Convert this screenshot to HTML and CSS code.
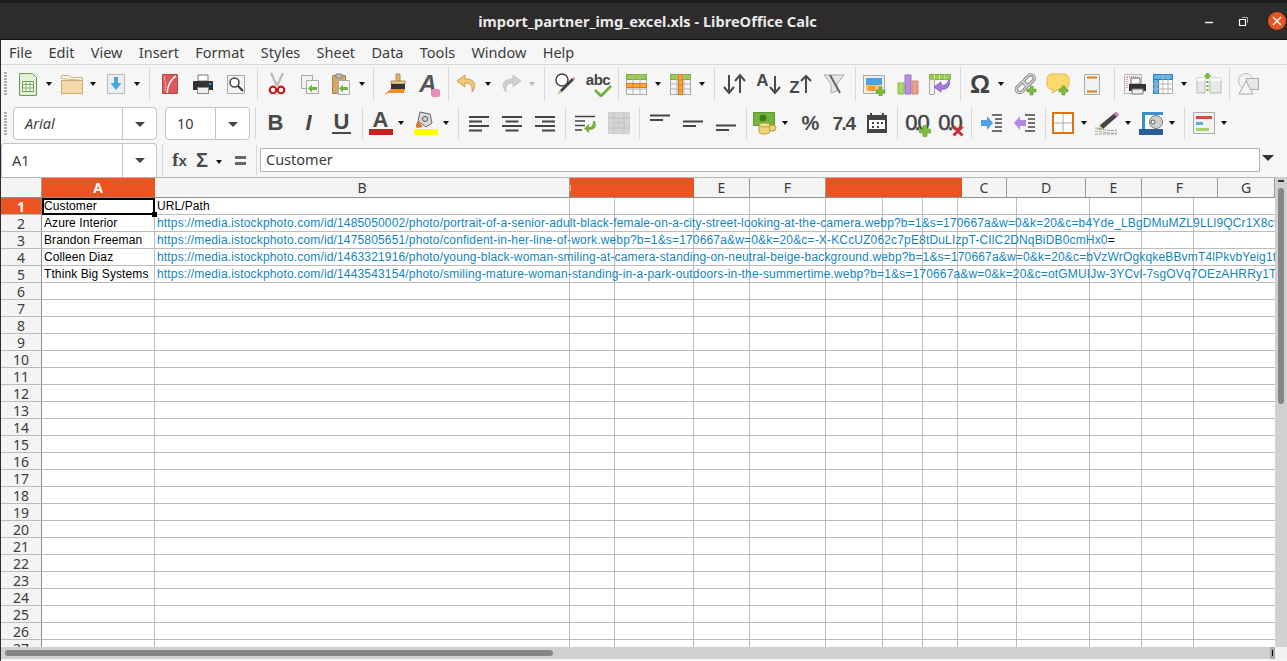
FILE: index.html
```html
<!DOCTYPE html>
<html>
<head>
  <meta charset="UTF-8">
  <title>import_partner_img_excel.xls - LibreOffice Calc</title>
  <link rel="stylesheet" href="styles.css">
</head>
<body>
<div class="window">
  <div class="titlebar">
    <div class="title">import_partner_img_excel.xls - LibreOffice Calc</div>
    <div class="winbtns">
      <svg class="winbtn" width="40" height="36" viewBox="0 0 40 36"><path d="M24 19.500h8" stroke="#eee" stroke-width="1.500"/></svg>
      <svg class="winbtn" width="40" height="36" viewBox="0 0 40 36"><path d="M18.500 16.500h6v6h-6z" fill="none" stroke="#fff" stroke-width="1.200"/><path d="M21 14.500h5.500v5.500" fill="none" stroke="#aaa"/></svg>
      <div class="closebtn"><svg width="10" height="10" viewBox="0 0 10 10"><path d="M1 1l8 8M9 1l-8 8" stroke="#fff" stroke-width="1.400"/></svg></div>
    </div>
  </div>

  <div class="menubar">
    <span>File</span><span>Edit</span><span>View</span><span>Insert</span><span>Format</span><span>Styles</span><span>Sheet</span><span>Data</span><span>Tools</span><span>Window</span><span>Help</span>
  </div>

  <div class="toolbar tb1">
    <div class="grip"></div>
    <div class="btn"><svg width="24" height="24"><path d="M3.500 1.500h13l4 4v18h-17z" fill="#e4efd9" stroke="#6f9a55"/><path d="M6.500 9.500h11v10h-11z" fill="#fff" stroke="#6f9a55"/><path d="M6.500 12.500h11M6.500 16h11M10 9.500v10M14 9.500v10" stroke="#7fa866"/></svg></div>
    <div class="arr"></div>
    <div class="btn"><svg width="24" height="24"><path d="M1.500 6.500v-3h8l2 2h11v3z" fill="#fbf3e0" stroke="#cdb68c"/><path d="M1.500 8.500h21v13h-21z" fill="#f3d9a9" stroke="#c9aa76"/></svg></div>
    <div class="arr"></div>
    <div class="btn"><svg width="24" height="24"><path d="M3.500 2.500h17v19h-17z" fill="#eceff1" stroke="#b9bdbf"/><path d="M10 5h4v6h3.500l-5.500 7-5.500-7h3.500z" fill="#42a5e5"/></svg></div>
    <div class="arr"></div>
    <div class="sep s10"></div>
    <div class="btn"><svg width="24" height="24"><path d="M4.500 2.500h15v19h-15z" fill="#d85a5a" stroke="#b24a4a"/><path d="M18 4c-5 3-8 8-9 17" fill="none" stroke="#fbeaea" stroke-width="1.500"/><path d="M6 4c2 5 2 10 1 15" fill="none" stroke="#eea0a0" stroke-width="1.200"/></svg></div>
    <div class="btn"><svg width="24" height="24"><path d="M7 3h10v6H7z" fill="#fff" stroke="#777"/><path d="M3 9h18a1 1 0 0 1 1 1v8h-4v-2H6v2H2v-8a1 1 0 0 1 1-1z" fill="#333"/><path d="M6.500 15.500h11v6h-11z" fill="#eee" stroke="#888"/><path d="M18 11h2v2h-2z" fill="#2aa6dd"/></svg></div>
    <div class="btn"><svg width="24" height="24"><path d="M3.500 3.500h17v18h-17z" fill="#f3f3f3" stroke="#a8a8a8"/><circle cx="10.500" cy="10.500" r="4.500" fill="#fff" stroke="#444" stroke-width="1.500"/><path d="M14 14l5 5" stroke="#333" stroke-width="2"/></svg></div>
    <div class="sep s8"></div>
    <div class="btn"><svg width="24" height="24"><path d="M6 1l6 13M18 1l-6 13" stroke="#a5a5a5" stroke-width="2"/><path d="M6 1l6 13M18 1l-6 13" stroke="#dcdcdc" stroke-width=".7"/><circle cx="8" cy="18" r="3.300" fill="none" stroke="#c21d1d" stroke-width="2.200"/><circle cx="16" cy="18" r="3.300" fill="none" stroke="#c21d1d" stroke-width="2.200"/><path d="M4 22.500h16" stroke="#ddd"/></svg></div>
    <div class="btn"><svg width="24" height="24"><path d="M3.500 3.500h11v13h-11z" fill="#f0f0f0" stroke="#aaa"/><path d="M8.500 8.500h12v13h-12z" fill="#f6f6f6" stroke="#aaa"/><path d="M19 15h-5v-2.500l-4 4 4 4v-2.500h5z" fill="#6fb33c"/></svg></div>
    <div class="btn mm2"><svg width="24" height="24"><path d="M3.500 3.500h13v18h-13z" fill="#d3a768" stroke="#a98450"/><path d="M7 2h6v4H7z" fill="#bbb" stroke="#888"/><path d="M9.500 8.500h11v14h-11z" fill="#f6f6f6" stroke="#aaa"/><path d="M19 15h-5v-2.500l-4 4 4 4v-2.500h5z" fill="#6fb33c"/></svg></div>
    <div class="arr"></div>
    <div class="sep s9"></div>
    <div class="btn"><svg width="24" height="24"><path d="M14 2h4v7h-4z" fill="#e0b878" stroke="#b38e54"/><path d="M9 9h14v3H9z" fill="#e8c88e" stroke="#b38e54"/><path d="M9 12h14v5H9z" fill="#333"/><path d="M9 17h14l-1 4H6l-4 2 3-3z" fill="#ee8d2a"/></svg></div>
    <div class="btn m1"><span class="clone"><b>A</b><i></i></span></div>
    <div class="sep s6"></div>
    <div class="btn"><svg width="24" height="24"><path d="M10 3L2 9l8 6v-4c5 0 8 2 7 9 4-5 5-13-7-13z" fill="#f0c877" stroke="#d39f3e"/></svg></div>
    <div class="arr"></div>
    <div class="btn"><svg width="24" height="24"><path d="M14 3l8 6-8 6v-4c-5 0-8 2-7 9-4-5-5-13 7-13z" fill="#cfcfcf" stroke="#c4c4c4"/></svg></div>
    <div class="arr off"></div>
    <div class="sep s10"></div>
    <div class="btn"><svg width="24" height="24"><circle cx="9" cy="8" r="6" fill="#fff" stroke="#444" stroke-width="1.500"/><path d="M21 8L9 20l-4 2 2-4L19 6z" fill="#444"/><path d="M21 8l-2-2 1.500-1 2 2z" fill="#e77fb3"/><path d="M5 22l2-4 2 2z" fill="#e8cf73"/></svg></div>
    <div class="btn"><span class="abc">abc</span><svg class="tick" width="20" height="12"><path d="M2 5l6 6L18 1" fill="none" stroke="#6db33f" stroke-width="2.800"/></svg></div>
    <div class="sep s6"></div>
    <div class="btn"><svg width="24" height="24"><use href="#tbl"/><path d="M1.500 11.500h20v4h-20z" fill="#f8a83f" stroke="#dd7c18"/><path d="M8 11.500v4M15 11.500v4" stroke="#dd7c18"/></svg></div>
    <div class="arr"></div>
    <div class="btn"><svg width="24" height="24"><use href="#tbl"/><path d="M9.500 2.500h4v20h-4z" fill="#f8a83f" stroke="#dd7c18"/><path d="M9.500 8h4M9.500 13h4M9.500 18h4" stroke="#dd7c18"/></svg></div>
    <div class="arr"></div>
    <div class="sep s10"></div>
    <div class="btn"><svg width="26" height="24"><path d="M7 3v18M2 15l5 6 5-6M18 21V3M13 9l5-6 5 6" fill="none" stroke="#4a4a4a" stroke-width="2"/></svg></div>
    <div class="btn m1"><span class="sortl up">A</span><svg width="13" height="24"><path d="M6 4v17M1 15l5 6 5-6" fill="none" stroke="#4a4a4a" stroke-width="2"/></svg></div>
    <div class="btn mm1"><span class="sortl down">Z</span><svg width="13" height="24"><path d="M6 21V4M1 9l5-5 5 5" fill="none" stroke="#4a4a4a" stroke-width="2"/></svg></div>
    <div class="btn"><svg width="24" height="24"><path d="M2 3h20l-7 9v7l-6 2v-9z" fill="#e6e6e6" stroke="#aaa"/><path d="M8 3l10 18" stroke="#666" stroke-width="2"/></svg></div>
    <div class="sep s8"></div>
    <div class="btn"><svg width="24" height="24"><path d="M.5 3.500h21v18H.5z" fill="#eee" stroke="#aaa"/><path d="M3 6h16v13H3z" fill="#49a4e0"/><path d="M3 13h16v6H3z" fill="#f5c96a"/><path d="M5 14h7v5H5z" fill="#ef9a3a"/><path d="M16 15h3v3h3v3h-3v3h-3v-3h-3v-3h3z" fill="#7cbd3f" stroke="#5b9a2b" stroke-width=".6"/></svg></div>
    <div class="btn"><svg width="24" height="24"><path d="M2 11h6v11H2z" fill="#a9d66d" stroke="#8cb954"/><path d="M9 3h6v19H9z" fill="#b790dc" stroke="#9672bb"/><path d="M16 9h6v13h-6z" fill="#ee9f8c" stroke="#cf8271"/></svg></div>
    <div class="btn mm1"><svg width="24" height="24"><path d="M1.500 2.500h21v5h-21z" fill="#9ccb55" stroke="#80ad3f"/><path d="M1.500 7.500h5v15h-5z" fill="#f2f2f2" stroke="#aaa"/><path d="M6.500 2.500v5M11.500 2.500v5M17 2.500v5" stroke="#cfe6a5"/><path d="M21 8c2 6-2 10-8 9v3l-7-5 7-5v3c4 1 6-1 8-5z" fill="#a77be0" stroke="#8a5ec8"/></svg></div>
    <div class="sep s7"></div>
    <div class="btn"><span class="omega">Ω</span></div>
    <div class="arr"></div>
    <div class="btn m2"><svg width="24" height="24"><g fill="none"><g stroke="#858585" stroke-width="3.200"><rect x="1.500" y="12" width="12" height="7" rx="3.500" transform="rotate(-45 7.500 15.500)"/><rect x="9" y="4.500" width="12" height="7" rx="3.500" transform="rotate(-45 15 8)"/></g><g stroke="#e2e2e2" stroke-width="1.100"><rect x="1.500" y="12" width="12" height="7" rx="3.500" transform="rotate(-45 7.500 15.500)"/><rect x="9" y="4.500" width="12" height="7" rx="3.500" transform="rotate(-45 15 8)"/></g></g><path d="M16 14h3v3h3v3h-3v3h-3v-3h-3v-3h3z" fill="#7cbd3f" stroke="#5b9a2b" stroke-width=".6"/></svg></div>
    <div class="btn mm1"><svg width="24" height="24"><path d="M6 2h12a5 5 0 0 1 5 5v5a5 5 0 0 1-5 5h-5l-7 4 2-4a5 5 0 0 1-7-5V7a5 5 0 0 1 5-5z" fill="#fbd96d" stroke="#e2b94a"/><path d="M16 14h3v3h3v3h-3v3h-3v-3h-3v-3h3z" fill="#7cbd3f" stroke="#5b9a2b" stroke-width=".6"/></svg></div>
    <div class="btn m1"><svg width="24" height="24"><path d="M4.500 2.500h15v20h-15z" fill="#f1f1f1" stroke="#aaa"/><path d="M7 5.500h10M7 19.500h10" stroke="#e07a12" stroke-width="2"/></svg></div>
    <div class="sep s10"></div>
    <div class="btn"><svg width="24" height="24"><path d="M1.500 2.500h17v19h-17z" fill="#f2f2f2" stroke="#bbb"/><path d="M4 5h12M4 5v12" stroke="#d55" stroke-dasharray="1 1"/><path d="M8 6h9v6H8z" fill="#fff" stroke="#666"/><path d="M6 12h17v7h-3v-1H9v1H6z" fill="#333"/><path d="M9 17h11v5H9z" fill="#eee" stroke="#777"/></svg></div>
    <div class="btn tight"><svg width="24" height="24"><path d="M2.500 2.500h19v19h-19z" fill="#fff" stroke="#aaa"/><path d="M2.500 2.500h19v5h-19zM2.500 7.500h5v14h-5z" fill="#5eb0e5" stroke="#2b80c0"/><path d="M7.500 12h14M7.500 17h14M12 7.500v14M17 7.500v14M2.500 12h5M2.500 17h5M12 2.500v5M17 2.500v5" stroke="#b5b5b5"/></svg></div>
    <div class="arr"></div>
    <div class="btn m2"><svg width="26" height="24"><path d="M1 6h8v15H1zM14 6h11v15H14z" fill="#e8e8e8" stroke="#aaa" stroke-width=".8"/><path d="M1 6h8v3H1zM14 6h11v3H14z" fill="#fafafa"/><path d="M11.500 5v2M11.500 9v2M11.500 13v2M11.500 17v2" stroke="#69ad33" stroke-width="2"/><path d="M10 1h3v1.500h1.500v3H13V7h-3V5.500H8.500v-3H10z" fill="#7cbd3f"/></svg></div>
    <div class="sep s7"></div>
    <div class="btn"><svg width="24" height="24"><circle cx="9" cy="9" r="7.500" fill="#f2f2f2" stroke="#bbb"/><path d="M9.500 6.500h12v11h-12z" fill="#e6e6e6" stroke="#aaa"/><path d="M9 9L16 22H2z" fill="#f4f4f4" stroke="#aaa"/></svg></div>
  </div>

  <div class="toolbar tb2">
    <div class="grip"></div>
    <div class="combo fontbox"><span class="comboval italic">Arial</span><span class="combodrop"><i></i></span></div>
    <div class="combo sizebox"><span class="comboval">10</span><span class="combodrop"><i></i></span></div>
    <div class="sep s9"></div>
    <div class="btn"><span class="fmt bold">B</span></div>
    <div class="btn"><span class="fmt slant">I</span></div>
    <div class="btn"><span class="fmt under">U</span></div>
    <div class="sep s8"></div>
    <div class="btn mm2"><span class="fcolor">A</span></div>
    <div class="arr"></div>
    <div class="btn m1"><svg width="26" height="24"><path d="M7 1l10 2 2 9-6 4-8-6z" fill="#d9d9d9" stroke="#666"/><circle cx="12" cy="8" r="2.500" fill="none" stroke="#555"/><path d="M5 10c-2 3-3 5-1 7l6-1z" fill="#d9772a"/><path d="M1 18h24v6H1z" fill="#ffff00"/></svg></div>
    <div class="arr"></div>
    <div class="sep s9"></div>
    <div class="btn"><svg width="24" height="24"><path d="M2 6h20M2 10.500h13M2 15h20M2 19.500h13" stroke="#444" stroke-width="1.800"/></svg></div>
    <div class="btn"><svg width="24" height="24"><path d="M2 6h20M5.500 10.500h13M2 15h20M5.500 19.500h13" stroke="#444" stroke-width="1.800"/></svg></div>
    <div class="btn"><svg width="24" height="24"><path d="M2 6h20M9 10.500h13M2 15h20M9 19.500h13" stroke="#444" stroke-width="1.800"/></svg></div>
    <div class="sep s8"></div>
    <div class="btn"><svg width="24" height="24"><path d="M1 5.500h20M1 10h10M1 14.500h10M1 19h7" stroke="#444" stroke-width="1.600"/><path d="M21 10c2 6 0 9-6 9v3l-5-4.500 5-4.500v3c2 0 4-1 4-6z" fill="#6fb33c"/></svg></div>
    <div class="btn"><svg width="24" height="24"><path d="M1.500 1.500h21v21h-21z" fill="#d5d5d5" stroke="#cfcfcf"/><path d="M1.500 7h21M1.500 17h21M7 1.500v21M17 1.500v21M7 12h10M12 7v10" stroke="#c0c0c0"/></svg></div>
    <div class="sep s8"></div>
    <div class="btn"><svg width="24" height="24"><path d="M2 4.500h20M2 9h13" stroke="#444" stroke-width="1.800"/></svg></div>
    <div class="btn"><svg width="24" height="24"><path d="M2 10.500h20M2 15h13" stroke="#444" stroke-width="1.800"/></svg></div>
    <div class="btn"><svg width="24" height="24"><path d="M2 14.500h20M2 19h13" stroke="#444" stroke-width="1.800"/></svg></div>
    <div class="sep s8"></div>
    <div class="btn mm2"><svg width="24" height="24"><path d="M.5 1.500h21v13H.5z" fill="#74b33d" stroke="#5b9a2b"/><circle cx="10" cy="7" r="3.500" fill="#3f7f1d"/><path d="M6 14h11v7a5.500 2 0 0 1-11 0z" fill="#ecd27a" stroke="#b89b3f"/><ellipse cx="11.500" cy="14" rx="5.500" ry="2" fill="#f3e09a" stroke="#b89b3f"/><ellipse cx="19.500" cy="17" rx="3.500" ry="3" fill="#ecd27a" stroke="#b89b3f"/></svg></div>
    <div class="arr"></div>
    <div class="btn m2"><span class="fmt pct">%</span></div>
    <div class="btn"><span class="fmt numfmt">7.4</span></div>
    <div class="btn"><svg width="24" height="24"><path d="M2 4h20v18H2z" fill="#444"/><path d="M4 9h16v9H4z" fill="#fff"/><path d="M6 4V2M18 4V2" stroke="#444" stroke-width="2"/><path d="M7 11h2v2H7zM12 11h2v2h-2zM16 11h2v2h-2zM7 15h2v2H7zM12 15h2v2h-2z" fill="#444"/></svg></div>
    <div class="sep s8"></div>
    <div class="btn"><span class="dec">0.0</span><svg class="badge" width="12" height="12"><path d="M4 .5h4v3.500h3.500v4H8v3.500H4V8H.5V4H4z" fill="#7cbd3f" stroke="#5b9a2b" stroke-width=".6"/></svg></div>
    <div class="btn"><span class="dec">0.0</span><svg class="badge" width="12" height="12"><path d="M1.500 1.500l9 9M10.500 1.500l-9 9" stroke="#c8303c" stroke-width="3"/></svg></div>
    <div class="sep s8"></div>
    <div class="btn"><svg width="24" height="24"><path d="M12 4h10M15 8h7M15 12h7M15 16h7M12 20h10" stroke="#444" stroke-width="1.500"/><path d="M1 9h6V5l6 7-6 7v-4H1z" fill="#4da4e3"/></svg></div>
    <div class="btn"><svg width="24" height="24"><path d="M12 4h10M15 8h7M15 12h7M15 16h7M12 20h10" stroke="#444" stroke-width="1.500"/><path d="M13 9H7V5l-6 7 6 7v-4h6z" fill="#b58ae3"/></svg></div>
    <div class="sep s8"></div>
    <div class="btn mm3"><svg width="24" height="24"><path d="M2 2h20v20H2z" fill="#fff" stroke="#dd7410" stroke-width="2"/><path d="M12 3v18M3 12h18" stroke="#aaa"/></svg></div>
    <div class="arr m1"></div>
    <div class="btn mm1"><svg width="26" height="24"><path d="M22 1l3 3L9 18l-5 1 2-5z" fill="#444"/><path d="M22 1l3 3-2 2-3-3z" fill="#df7fc0"/><path d="M4 19l2-5 3 4z" fill="#e8cf73"/><path d="M1 17c5 0 12 4 22 2M1 20c5 0 12 3 22 2M1 23h22" fill="none" stroke="#888" stroke-width=".8" stroke-dasharray="3 1"/></svg></div>
    <div class="arr m1"></div>
    <div class="btn"><svg width="26" height="24"><path d="M3 1h21v3H6v15H3z" fill="#3b8fcb"/><path d="M6 4h18v16H6z" fill="#fff"/><circle cx="17" cy="11" r="6.500" fill="#cfcfcf" stroke="#777"/><circle cx="14" cy="11" r="2" fill="#fff" stroke="#555"/><path d="M0 18h24v6H0z" fill="#2a5d98"/></svg></div>
    <div class="arr"></div>
    <div class="sep s10"></div>
    <div class="btn mm2"><svg width="24" height="24"><path d="M1.500 1.500h21v21h-21z" fill="#f2f2f2" stroke="#aaa"/><path d="M4 5h16v3H4z" fill="#d44a4a"/><path d="M4 11h7v3H4z" fill="#58b0e0"/><path d="M4 17h13v3H4z" fill="#a4d362"/></svg></div>
    <div class="arr"></div>
  </div>

  <div class="formulabar">
    <div class="combo namebox"><span class="comboval">A1</span><span class="combodrop"><i></i></span></div>
    <div class="sep s10 fsep"></div>
    <div class="fbtn fx">f<sub>x</sub></div>
    <div class="fbtn sigma">Σ</div>
    <div class="arr sarr"></div>
    <div class="fbtn equal"><i></i><i></i></div>
    <div class="sep s8 fsep"></div>
    <div class="formula">Customer</div>
    <div class="fexpand"></div>
  </div>

  <div class="sheetwrap">
    <div class="sheet">
      <div class="colhead">
        <div class="corner"></div>
        <div class="sel">A</div>
        <div>B</div>
        <div class="sel speck"></div>
        <div>E</div>
        <div>F</div>
        <div class="sel"></div>
        <div>C</div>
        <div>D</div>
        <div>E</div>
        <div>F</div>
        <div>G</div>
      </div>
      <div class="rows">
        <div class="row"><span class="num cur">1</span><span class="cell">Customer</span><span class="cell">URL/Path</span></div>
        <div class="row"><span class="num">2</span><span class="cell">Azure Interior</span><span class="cell link">https://media.istockphoto.com/id/1485050002/photo/portrait-of-a-senior-adult-black-female-on-a-city-street-looking-at-the-camera.webp?b=1&amp;s=170667a&amp;w=0&amp;k=20&amp;c=b4Yde_LBgDMuMZL9LLl9QCr1X8cf0</span></div>
        <div class="row"><span class="num">3</span><span class="cell">Brandon Freeman</span><span class="cell link">https://media.istockphoto.com/id/1475805651/photo/confident-in-her-line-of-work.webp?b=1&amp;s=170667a&amp;w=0&amp;k=20&amp;c=-X-KCcUZ062c7pE8tDuLIzpT-CIlC2DNqBiDB0cmHx0<em>=</em></span></div>
        <div class="row"><span class="num">4</span><span class="cell">Colleen Diaz</span><span class="cell link">https://media.istockphoto.com/id/1463321916/photo/young-black-woman-smiling-at-camera-standing-on-neutral-beige-background.webp?b=1&amp;s=170667a&amp;w=0&amp;k=20&amp;c=bVzWrOgkqkeBBvmT4lPkvbYeig1t</span></div>
        <div class="row"><span class="num">5</span><span class="cell">Tthink Big Systems</span><span class="cell link">https://media.istockphoto.com/id/1443543154/photo/smiling-mature-woman-standing-in-a-park-outdoors-in-the-summertime.webp?b=1&amp;s=170667a&amp;w=0&amp;k=20&amp;c=otGMUIJw-3YCvl-7sgOVq7OEzAHRRy1TC</span></div>
        <div class="row"><span class="num">6</span></div>
        <div class="row"><span class="num">7</span></div>
        <div class="row"><span class="num">8</span></div>
        <div class="row"><span class="num">9</span></div>
        <div class="row"><span class="num">10</span></div>
        <div class="row"><span class="num">11</span></div>
        <div class="row"><span class="num">12</span></div>
        <div class="row"><span class="num">13</span></div>
        <div class="row"><span class="num">14</span></div>
        <div class="row"><span class="num">15</span></div>
        <div class="row"><span class="num">16</span></div>
        <div class="row"><span class="num">17</span></div>
        <div class="row"><span class="num">18</span></div>
        <div class="row"><span class="num">19</span></div>
        <div class="row"><span class="num">20</span></div>
        <div class="row"><span class="num">21</span></div>
        <div class="row"><span class="num">22</span></div>
        <div class="row"><span class="num">23</span></div>
        <div class="row"><span class="num">24</span></div>
        <div class="row"><span class="num">25</span></div>
        <div class="row"><span class="num">26</span></div>
        <div class="row"><span class="num">27</span></div>
        <div class="cursor"></div>
      </div>
    </div>
    <div class="vscroll"><div class="vtop"></div><div class="vthumb"></div></div>
  </div>

  <div class="hscroll">
    <div class="htrack"><div class="hthumb"></div><div class="htick"></div></div>
    <div class="hcorner"></div>
  </div>
</div>

<svg class="defs" width="0" height="0">
  <g id="tbl"><path d="M1.500 2.500h20v20h-20z" fill="#f4f4f4" stroke="#aaa"/><path d="M1.500 2.500h20v5h-20z" fill="#9ccb55" stroke="#80ad3f"/><path d="M1.500 12h20M1.500 17h20M8 2.500v20M15 2.500v20" stroke="#b5b5b5"/></g>
</svg>
</body>
</html>
```

FILE: styles.css
```css
html, body {
  margin: 0;
  height: 100%;
  overflow: hidden;
}
body {
  background: #f6f6f6;
  font-family: "Noto Sans", sans-serif;
  color: #3c3c3c;
}
.defs {
  display: block;
  height: 0;
}
.window {
  display: flex;
  flex-direction: column;
  height: 661px;
  border-left: 1px solid #2d2b2b;
}

/* title bar */
.titlebar {
  display: flex;
  align-items: center;
  height: 36px;
  margin-left: -1px;
  padding-left: 8px;
  background: #2d2b2b;
  border-top: 3px solid #1b1b1b;
  border-bottom: 1px solid #111;
}
.title {
  flex: 1;
  text-align: center;
  font-size: 14.6px;
  font-weight: 700;
  color: #e9e9e9;
}
.winbtns {
  position: absolute;
  right: 1px;
  top: 3px;
  display: flex;
  align-items: center;
  height: 36px;
}
.winbtn {
  display: block;
}
.closebtn {
  display: flex;
  align-items: center;
  justify-content: center;
  width: 18px;
  height: 18px;
  margin-left: 7px;
  border-radius: 50%;
  background: #e95420;
}

/* menu */
.menubar {
  display: flex;
  gap: 16.3px;
  align-items: center;
  height: 24px;
  padding-left: 8px;
  border-bottom: 1px solid #d6d6d6;
  font-size: 14.5px;
}

/* toolbars */
.toolbar {
  display: flex;
  align-items: center;
  position: relative;
}
.tb1 {
  height: 38px;
  padding: 0 0 2px 10.5px;
}
.tb2 {
  height: 36px;
  padding: 0 0 2px 12px;
}
.grip {
  position: absolute;
  left: 3px;
  top: 7px;
  width: 3px;
  height: 24px;
  background: repeating-linear-gradient(#b0b0b0 0 2px, transparent 2px 3px);
}
.btn {
  position: relative;
  display: flex;
  align-items: center;
  justify-content: center;
  flex: none;
  width: 33px;
  height: 30px;
}
.btn svg {
  flex: none;
}
.arr {
  flex: none;
  width: 11px;
  height: 30px;
  position: relative;
}
.arr::after {
  content: "";
  position: absolute;
  left: 1px;
  top: 13px;
  border-left: 3.5px solid transparent;
  border-right: 3.5px solid transparent;
  border-top: 4px solid #111;
}
.arr.off::after {
  border-top-color: #b8b8b8;
}
.sep {
  flex: none;
  height: 32px;
  position: relative;
}
.sep::after {
  content: "";
  position: absolute;
  left: 50%;
  top: 0;
  bottom: 0;
  width: 1px;
  background: #d8d8d8;
}
.s6 { width: 6px; }
.s7 { width: 7px; }
.s8 { width: 8px; }
.s9 { width: 9px; }
.s10 { width: 10px; }
.m1 { margin-left: 1px; }
.m2 { margin-left: 2px; }
.mm1 { margin-left: -1px; }
.mm2 { margin-left: -2px; }
.mm3 { margin-left: -3px; }
.tight { margin-left: -5px; }

/* text drawn icons */
.fmt {
  font-family: "Liberation Sans", sans-serif;
  color: #484848;
  font-weight: 700;
  line-height: 1;
}
.bold { font-size: 22px; }
.slant { font-size: 22px; font-style: italic; }
.under {
  font-size: 22px;
  border-bottom: 2px solid #484848;
  padding: 0 2px;
  line-height: 20px;
}
.pct { font-size: 20px; }
.numfmt { font-size: 19px; letter-spacing: -1.5px; }
.fcolor {
  font: 700 22px/18px "Liberation Sans", sans-serif;
  color: #4a4a4a;
  width: 24px;
  text-align: center;
  border-bottom: 6px solid #c9211e;
}
.clone {
  position: relative;
  display: block;
  width: 22px;
  text-align: center;
}
.clone b {
  font: 700 italic 24px/1 "Liberation Sans", sans-serif;
  color: #555;
}
.clone i {
  position: absolute;
  right: -1px;
  bottom: 0;
  width: 9px;
  height: 8px;
  border-radius: 2px;
  background: #ec8fb4;
}
.abc {
  font: 700 15px/1 "Liberation Sans", sans-serif;
  letter-spacing: -.5px;
  color: #444;
  margin-top: -9px;
}
.tick {
  position: absolute;
  left: 11px;
  top: 16px;
}
.sortl {
  font: 700 17px/1 "Liberation Sans", sans-serif;
  color: #4a4a4a;
}
.sortl.up { margin-top: -7px; }
.sortl.down { margin-top: 7px; }
.omega {
  font: 700 25px/1 "Liberation Sans", sans-serif;
  color: #444;
}
.dec {
  font: 400 22px/1 "Liberation Sans", sans-serif;
  letter-spacing: -3px;
  margin-left: -3px;
  color: #444;
  -webkit-text-stroke: .5px #444;
}
.badge {
  position: absolute;
  right: 3px;
  bottom: 1px;
}

/* combo boxes */
.combo {
  display: flex;
  flex: none;
  height: 31px;
  background: #fff;
  border: 1px solid #c4c4c4;
  border-radius: 4px;
}
.comboval {
  flex: 1;
  display: flex;
  align-items: center;
  font-size: 14.5px;
}
.italic { font-style: italic; }
.combodrop {
  position: relative;
  flex: none;
  width: 33px;
  border-left: 1px solid #c4c4c4;
}
.combodrop i {
  position: absolute;
  left: 12px;
  top: 14px;
  border-left: 5px solid transparent;
  border-right: 5px solid transparent;
  border-top: 5px solid #444;
}
.fontbox {
  width: 142px;
}
.fontbox .comboval { padding-left: 11px; }
.sizebox {
  width: 83px;
  margin-left: 8px;
}
.sizebox .comboval { padding-left: 11px; }
.namebox {
  width: 154px;
  height: 34px;
  border-bottom-width: 0;
  border-radius: 4px 4px 0 0;
}
.namebox .comboval { padding: 0 0 2px 10px; }

/* formula bar */
.formulabar {
  display: flex;
  align-items: flex-start;
  height: 34px;
  overflow: hidden;
}
.fsep {
  margin-top: 2px;
  height: 30px;
}
.fbtn {
  flex: none;
  display: flex;
  align-items: center;
  justify-content: center;
  height: 34px;
  font-family: "Liberation Sans", sans-serif;
  font-weight: 700;
  color: #4a4a4a;
}
.fx {
  width: 25px;
  font-size: 19px;
  font-family: "Liberation Serif", serif;
}
.fx sub {
  font-size: 15px;
  line-height: 1;
  vertical-align: -2px;
  font-family: "Liberation Sans", sans-serif;
}
.sigma {
  width: 20px;
  font-size: 20px;
}
.sarr {
  margin-top: 4px;
  margin-left: 3px;
}
.equal {
  flex-direction: column;
  gap: 3px;
  width: 18px;
  margin-left: 5px;
  margin-right: 3px;
}
.equal i {
  display: block;
  width: 11px;
  height: 3px;
  background: #666;
}
.formula {
  flex: 1;
  height: 22px;
  margin-top: 5px;
  padding-left: 5px;
  background: #fff;
  border: 1px solid #b5b5b5;
  font-size: 14.5px;
  line-height: 21px;
}
.fexpand {
  flex: none;
  width: 27px;
  position: relative;
}
.fexpand::after {
  content: "";
  position: absolute;
  left: 2px;
  top: 12px;
  border-left: 6px solid transparent;
  border-right: 6px solid transparent;
  border-top: 6px solid #333;
}

/* sheet */
.sheetwrap {
  display: flex;
  height: 470px;
}
.sheet {
  flex: none;
  width: 1274px;
  overflow: hidden;
  background: #fff;
}
.colhead {
  display: grid;
  grid-template-columns: 41px 113px 415px 124px 56px 76px 136px 45px 79px 56px 76px 57px;
  height: 19px;
  border-top: 1px solid #b5b5b5;
  border-bottom: 1px solid #8e8e8e;
  background: #f4f4f4;
  font-size: 14px;
  line-height: 19px;
  text-align: center;
}
.colhead > div {
  box-sizing: border-box;
  border-right: 1px solid #9a9a9a;
}
.colhead .sel {
  background: #e95420;
  color: #fff;
  font-weight: 700;
  border-right-color: #e95420;
}
.colhead .speck {
  background: linear-gradient(#f7c35a, #f7c35a) 0 7px / 1px 6px no-repeat, #e95420;
}
.rows {
  position: relative;
  height: 449px;
  /* vertical grid lines of the cell area */
  background:
    linear-gradient(#bcbcbc, #bcbcbc) 153px 0 / 1px 100% no-repeat,
    linear-gradient(#bcbcbc, #bcbcbc) 568px 0 / 1px 100% no-repeat,
    linear-gradient(#bcbcbc, #bcbcbc) 613px 0 / 1px 100% no-repeat,
    linear-gradient(#bcbcbc, #bcbcbc) 692px 0 / 1px 100% no-repeat,
    linear-gradient(#bcbcbc, #bcbcbc) 748px 0 / 1px 100% no-repeat,
    linear-gradient(#bcbcbc, #bcbcbc) 824px 0 / 1px 100% no-repeat,
    linear-gradient(#bcbcbc, #bcbcbc) 881px 0 / 1px 100% no-repeat,
    linear-gradient(#bcbcbc, #bcbcbc) 921px 0 / 1px 100% no-repeat,
    linear-gradient(#bcbcbc, #bcbcbc) 956px 0 / 1px 100% no-repeat,
    linear-gradient(#bcbcbc, #bcbcbc) 1015px 0 / 1px 100% no-repeat,
    linear-gradient(#bcbcbc, #bcbcbc) 1088px 0 / 1px 100% no-repeat,
    linear-gradient(#bcbcbc, #bcbcbc) 1140px 0 / 1px 100% no-repeat,
    linear-gradient(#bcbcbc, #bcbcbc) 1192px 0 / 1px 100% no-repeat;
}
.row {
  display: flex;
  box-sizing: border-box;
  height: 17px;
  border-bottom: 1px solid #bcbcbc;
  white-space: nowrap;
  font: 12px/16px "Liberation Sans", sans-serif;
  color: #000;
}
.num {
  flex: none;
  box-sizing: border-box;
  width: 41px;
  height: 17px;
  margin-bottom: -1px;
  background: #f4f4f4;
  border-right: 1px solid #8e8e8e;
  border-bottom: 1px solid #bcbcbc;
  text-align: center;
  font: 14px/17px "Noto Sans", sans-serif;
  color: #3c3c3c;
}
.num.cur {
  background: #e95420;
  color: #fff;
  font-weight: 700;
}
.cell {
  flex: none;
  width: 113px;
  padding-left: 2px;
  box-sizing: border-box;
  letter-spacing: .1px;
}
.link {
  color: #1285bd;
  letter-spacing: .16px;
}
.link em {
  font-style: normal;
  color: #000;
}
.cursor {
  position: absolute;
  left: 41px;
  top: 0;
  box-sizing: border-box;
  width: 113px;
  height: 17px;
  border: 2px solid #000;
}
.cursor::after {
  content: "";
  position: absolute;
  right: -4px;
  bottom: -4px;
  width: 5px;
  height: 5px;
  background: #000;
}

/* scrollbars */
.vscroll {
  flex: none;
  position: relative;
  width: 12px;
  background: #d0d0d0;
}
.vtop {
  height: 5px;
  margin: 3px 3px 0;
  border-top: 2px solid #333;
}
.vthumb {
  position: absolute;
  left: 3px;
  right: 3px;
  top: 11px;
  height: 216px;
  border-radius: 3px;
  background: #868686;
}
.hscroll {
  display: flex;
  height: 12px;
}
.htrack {
  position: relative;
  flex: none;
  width: 1274px;
  background: #d0d0d0;
}
.hthumb {
  position: absolute;
  left: 4px;
  top: 3px;
  width: 548px;
  height: 6px;
  border-radius: 3px;
  background: #868686;
}
.htick {
  position: absolute;
  right: 0;
  top: 0;
  width: 5px;
  height: 12px;
  background: linear-gradient(#000, #000) 2px 3px / 1px 6px no-repeat, #a9a9a9;
}
.hcorner {
  flex: 1;
  background: #f2f2f2;
}
```
